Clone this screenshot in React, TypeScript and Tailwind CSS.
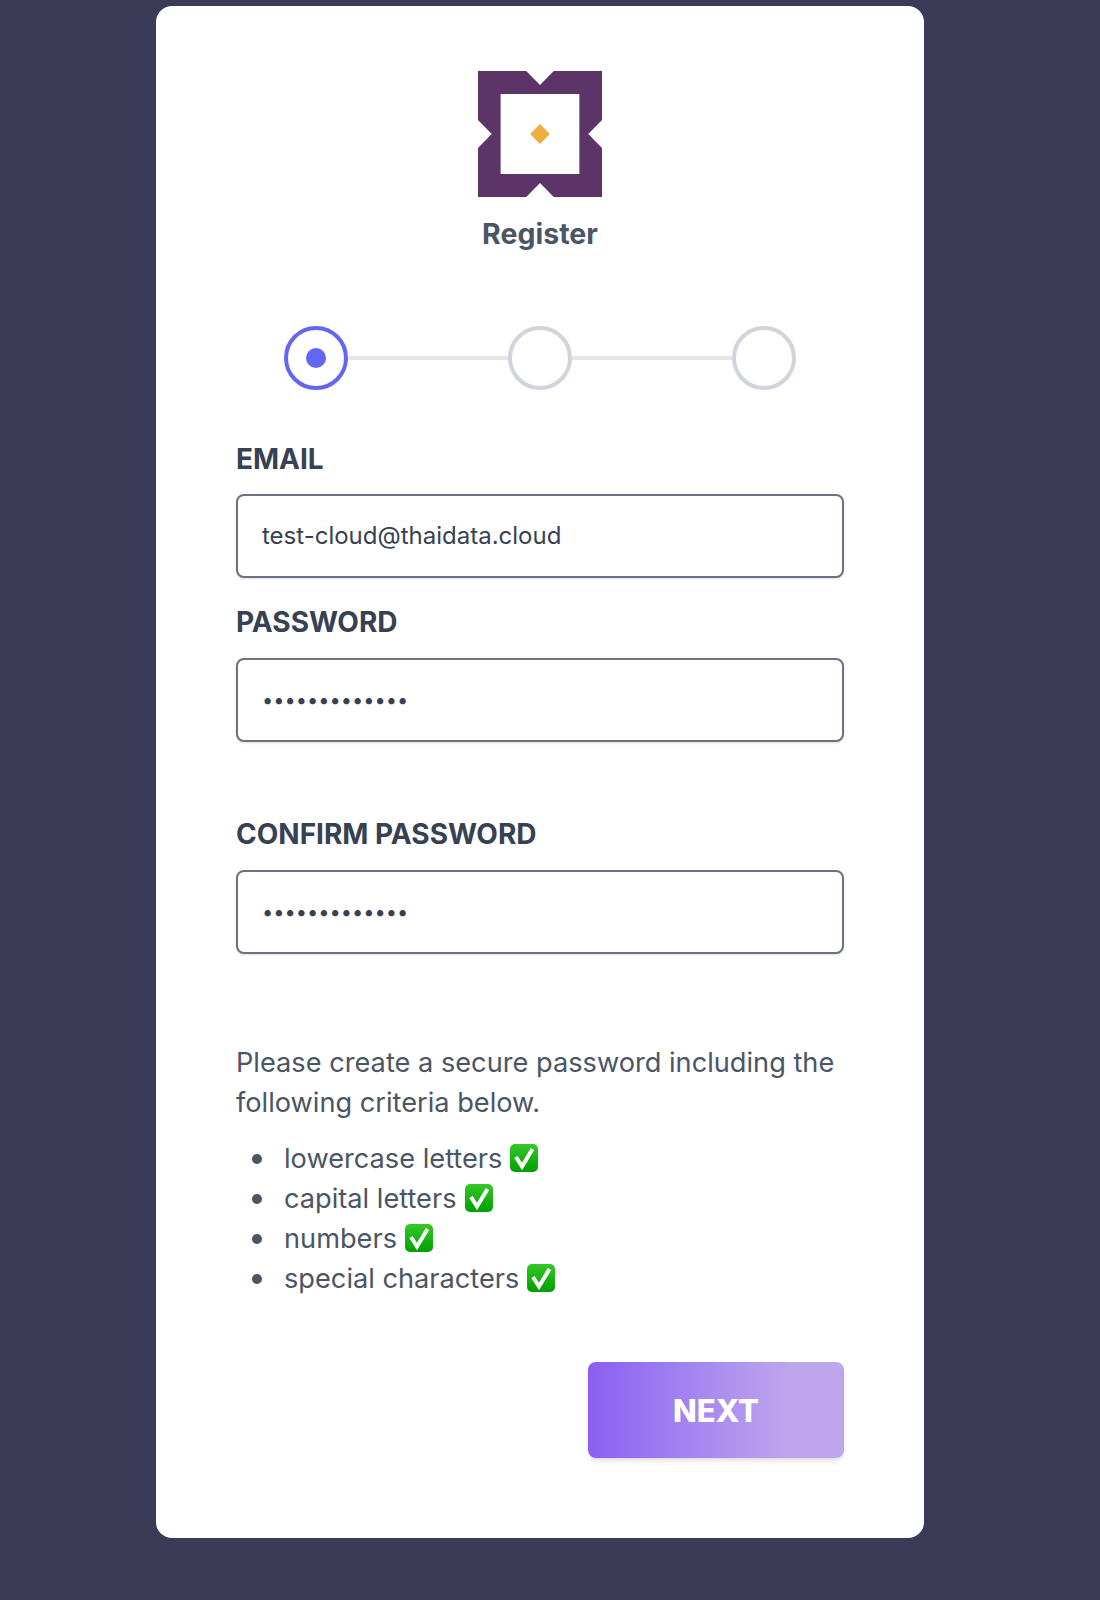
const INTER = "font-['Inter',sans-serif]";

function Logo() {
  return (
    <svg width="124" height="126" viewBox="0 0 126 126" preserveAspectRatio="none" className="block">
      <path
        fillRule="evenodd"
        fill="#5c3468"
        d="M0 0H49L63 14L77 0H126V49L112 63L126 77V126H77L63 112L49 126H0V77L14 63L0 49ZM23 23V103H103V23Z"
      />
      <path fill="#f0ad3e" d="M63 53L73 63L63 73L53 63Z" />
    </svg>
  );
}

function CheckEmoji({ id }: { id: string }) {
  return (
    <svg width="28" height="28" viewBox="0 0 28 28" className="ml-2 block shrink-0 -translate-y-[1px]">
      <defs>
        <linearGradient id={id} x1="0" y1="0" x2="0" y2="1">
          <stop offset="0" stopColor="#35c828" />
          <stop offset="1" stopColor="#00a000" />
        </linearGradient>
      </defs>
      <rect width="28" height="28" rx="5" fill={`url(#${id})`} />
      <path d="M6 13L12 22.5L22.5 5" fill="none" stroke="#ffffff" strokeWidth="4" />
    </svg>
  );
}

function Field({ label, type, value, className }: { label: string; type: string; value: string; className?: string }) {
  const isPassword = type === "password";
  return (
    <label className={`block ${className ?? ""}`}>
      <span className="block text-[28px] leading-[40px] font-bold text-[#374151] uppercase">{label}</span>
      <input
        type={type}
        defaultValue={value}
        className={`block h-[84px] w-full rounded-lg border-2 border-[#6b7280] bg-white px-6 text-[#374151] shadow-sm outline-none ${
          isPassword ? "mt-4 text-[20px]" : "mt-[15px] pb-[2px] text-[24px]"
        }`}
      />
    </label>
  );
}

export default function App() {
  const criteria = ["lowercase letters", "capital letters", "numbers", "special characters"];

  return (
    <div className={`min-h-[1600px] bg-[#3b3b58] pt-[6px] ${INTER}`}>
      <div className="ml-[156px] h-[1532px] w-[768px] rounded-2xl bg-white px-20 pt-[65px]">
        <div className="flex flex-col items-center">
          <Logo />
          <h1 className="mt-[17px] text-[28.5px] leading-[40px] font-bold text-[#4b5563]">Register</h1>
        </div>

        <div className="mt-[72px] flex items-center justify-center">
          <div className="flex h-16 w-16 items-center justify-center rounded-full border-4 border-[#6366f1]">
            <div className="h-5 w-5 rounded-full bg-[#6366f1]" />
          </div>
          <div className="h-1 w-40 bg-[#e5e7eb]" />
          <div className="h-16 w-16 rounded-full border-4 border-[#d1d5db]" />
          <div className="h-1 w-40 bg-[#e5e7eb]" />
          <div className="h-16 w-16 rounded-full border-4 border-[#d1d5db]" />
        </div>

        <Field className="mt-[49px]" label="Email" type="email" value="test-cloud@thaidata.cloud" />
        <Field className="mt-6" label="Password" type="password" value="Password1234!" />
        <Field className="mt-[72px]" label="Confirm Password" type="password" value="Password1234!" />

        <p className="mt-[89px] text-[27.2px] leading-[40px] text-[#4b5563]">
          Please create a secure password including the following criteria below.
        </p>
        <ul className="mt-4 text-[27.2px] leading-[40px] text-[#4b5563]">
          {criteria.map((item, i) => (
            <li key={item} className="flex items-center">
              <span className="mr-[22px] ml-4 h-[10px] w-[10px] shrink-0 rounded-full bg-[#4b5563]" />
              <span>{item}</span>
              <CheckEmoji id={`check-bg-${i}`} />
            </li>
          ))}
        </ul>

        <div className="mt-[63px] flex justify-end">
          <button
            type="button"
            className="h-24 w-64 rounded-lg bg-gradient-to-r from-[#8b5ef2] to-[#bfa6ec] to-80% pt-[2px] text-[31px] font-extrabold text-white shadow-md"
          >
            NEXT
          </button>
        </div>
      </div>
    </div>
  );
}
